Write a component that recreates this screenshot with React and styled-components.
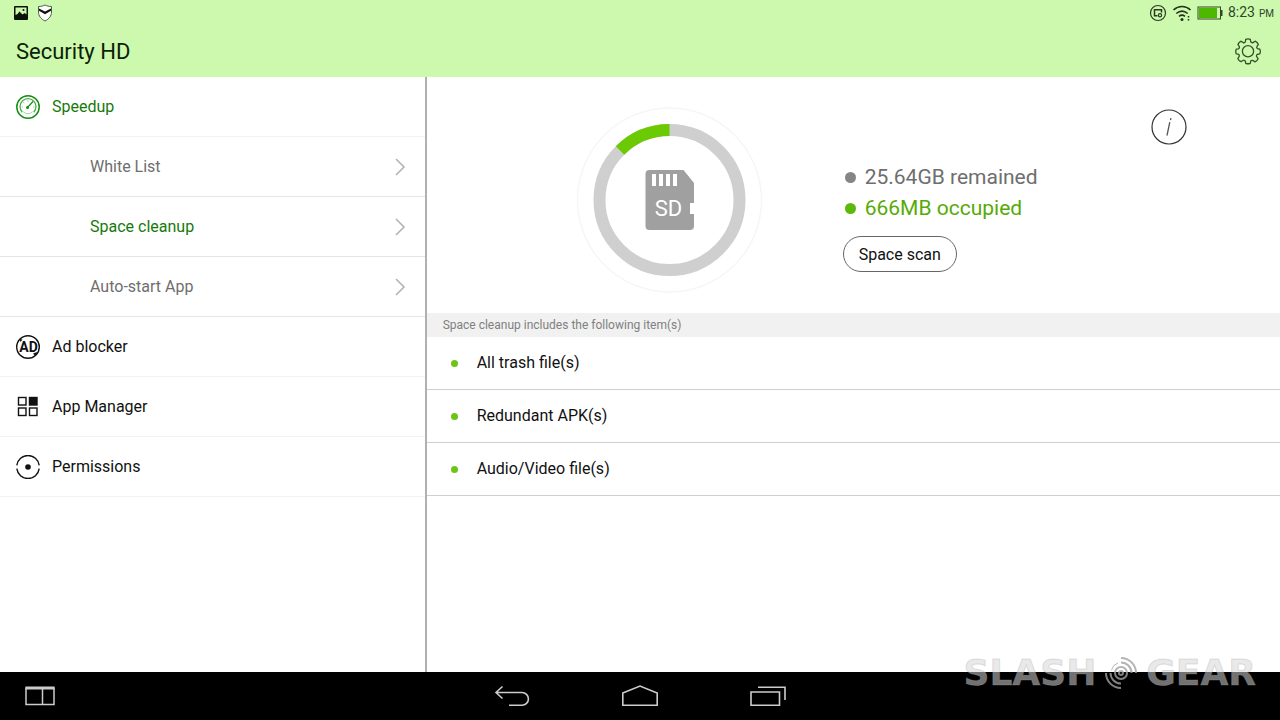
import React from 'react'
import styled, { createGlobalStyle } from 'styled-components'

const GlobalStyle = createGlobalStyle`
  * {
    box-sizing: border-box;
  }
  body {
    margin: 0;
    background: #fff;
    font-family: Roboto, "Noto Sans", sans-serif;
  }
  button {
    font-family: inherit;
    background: none;
    border: none;
    padding: 0;
    cursor: pointer;
  }
  svg {
    display: block;
    flex-shrink: 0;
  }
`

const Page = styled.div`
  position: relative;
  display: flex;
  flex-direction: column;
  min-height: 100vh;
`

const Header = styled.header`
  background: #ccf9ae;
  color: #0d1f08;
`

const StatusBar = styled.div`
  display: flex;
  justify-content: space-between;
  align-items: center;
  height: 26px;
  padding: 0 6px 0 13px;
`

const StatusGroup = styled.div`
  display: flex;
  align-items: center;
  gap: ${(props) => props.$gap}px;
`

const Clock = styled.span`
  font-size: 14px;
  line-height: 18px;
  color: #33452b;

  small {
    font-size: 10px;
    margin-left: 4px;
  }
`

const TitleBar = styled.div`
  display: flex;
  justify-content: space-between;
  align-items: center;
  height: 51px;
  padding: 0 18px 0 16px;

  h1 {
    margin: 0;
    font-size: 22px;
    font-weight: 400;
    line-height: 28px;
  }
`

const Content = styled.div`
  flex: 1;
  display: grid;
  grid-template-columns: 1fr 2fr;
`

const Sidebar = styled.nav`
  border-right: 2px solid #b0b0b0;
`

const NavItem = styled.a`
  display: flex;
  align-items: center;
  gap: 12px;
  height: 60px;
  padding: 0 16px;
  border-bottom: 1px solid ${(props) => (props.$sub ? '#e6e6e6' : '#f3f3f3')};
  color: ${(props) => (props.$active ? '#157a0c' : '#111')};
  font-size: 16px;
  line-height: 21px;
  text-decoration: none;
`

const SubItem = styled(NavItem)`
  justify-content: space-between;
  padding: 0 19px 0 90px;
  color: ${(props) => (props.$active ? '#157a0c' : '#6e6e6e')};
`

const Main = styled.main`
  min-width: 0;
`

const Overview = styled.section`
  display: flex;
  align-items: flex-start;
  padding: 30px 93px 20px 150px;
`

const Stats = styled.div`
  flex: 1;
  margin-left: 80px;
  padding-top: 55px;
`

const Stat = styled.div`
  display: flex;
  align-items: center;
  gap: 9px;
  padding-left: 2px;
  color: ${(props) => props.$color};
  font-size: 21px;
  line-height: 31px;

  &::before {
    content: '';
    width: 11px;
    height: 11px;
    border-radius: 50%;
    background: ${(props) => props.$dot};
  }
`

const ScanButton = styled.button`
  height: 36px;
  margin-top: 12px;
  padding: 0 15px;
  border: 1px solid #666;
  border-radius: 18px;
  color: #111;
  font-size: 16px;
`

const InfoButton = styled.button`
  margin-top: 2px;
`

const SectionTitle = styled.h2`
  margin: 0;
  padding: 0 16px;
  background: #f1f1f1;
  color: #808080;
  font-size: 12px;
  font-weight: 400;
  line-height: 24px;
`

const ItemList = styled.ul`
  margin: 0;
  padding: 0;
  list-style: none;
`

const Item = styled.li`
  display: flex;
  align-items: center;
  gap: 19px;
  height: 53px;
  padding: 0 24px;
  border-bottom: 1px solid #cfcfcf;
  color: #111;
  font-size: 16px;
  line-height: 22px;

  &::before {
    content: '';
    width: 7px;
    height: 7px;
    border-radius: 50%;
    background: #6cc413;
  }
`

const BottomBar = styled.footer`
  display: grid;
  grid-template-columns: 1fr auto 1fr;
  align-items: center;
  height: 48px;
  padding: 0 24px;
  background: #000;
`

const BottomKeys = styled.div`
  display: flex;
`

const KeyButton = styled.button`
  display: flex;
  justify-content: center;
  align-items: center;
  width: ${(props) => props.$width}px;
  height: 48px;
`

const Watermark = styled.div`
  position: absolute;
  right: 24px;
  bottom: 27px;
  display: flex;
  align-items: center;
  gap: 8px;
  color: rgba(215, 215, 215, 0.55);
  -webkit-text-stroke: 1px rgba(160, 160, 160, 0.3);
  font-family: "DejaVu Sans", sans-serif;
  font-size: 36px;
  font-weight: 700;
  line-height: 40px;
  pointer-events: none;
`

const PictureIcon = () => (
  <svg width="16" height="16" viewBox="0 0 16 16" aria-hidden="true">
    <rect x="1" y="1" width="14" height="14" rx="1" fill="#0c1408" />
    <path d="M2.500 2.500h11v7l-2-1.500-2 1.500-3-3-2 2.500-2 1z" fill="#ccf9ae" />
    <circle cx="10.500" cy="5" r="1" fill="#0c1408" />
  </svg>
)

const ShieldIcon = () => (
  <svg width="16" height="18" viewBox="0 0 16 18" aria-hidden="true">
    <path d="M8 1c2 1 4 1.500 6.500 1.500V8c0 4-2.500 7-6.500 9-4-2-6.500-5-6.500-9V2.500C4 2.500 6 2 8 1z" fill="#fff" stroke="#4b5d44" />
    <path d="M2 4.500l6 3 6-3v2.300l-6 3.400-6-3.400z" fill="#0c1408" />
  </svg>
)

const CastIcon = () => (
  <svg width="18" height="18" viewBox="0 0 18 18" fill="none" stroke="#2a3a22" aria-hidden="true">
    <circle cx="9" cy="9" r="7.500" strokeWidth="1.200" />
    <path d="M8.500 11.800H5.500V5.800h7v2.700" strokeWidth="1.500" />
    <circle cx="11" cy="11.200" r="1.600" strokeWidth="1.200" />
  </svg>
)

const WifiIcon = () => (
  <svg width="20" height="18" viewBox="0 0 20 18" fill="none" stroke="#22321b" strokeWidth="1.600" aria-hidden="true">
    <path d="M1.500 6c5-4.600 12-4.600 17 0M4.300 9.500c3.500-3 7.900-3 11.400 0M7 12.300c2-1.600 4-1.600 6 0" />
    <circle cx="10" cy="15.500" r="1.500" fill="#22321b" stroke="none" />
    <path d="M16.500 12v1.500M16.500 15v1.500" strokeWidth="1.500" />
  </svg>
)

const BatteryIcon = () => (
  <svg width="26" height="14" viewBox="0 0 26 14" aria-hidden="true">
    <rect x="1" y="1" width="22.500" height="12" fill="none" stroke="#33452b" />
    <rect x="2" y="2" width="18" height="10" fill="#4db800" />
    <rect x="24" y="4" width="1.500" height="6" fill="#33452b" />
  </svg>
)

const GearIcon = () => (
  <svg width="28" height="28" viewBox="-1 0.3 30 30" fill="none" stroke="#35502a" strokeWidth="1.400" strokeLinejoin="round" aria-hidden="true">
    <path d="M11.500 1.800q2.500-1 5 0l.4 2.300q.3 1 1.300 1.200.8.300 1.500-.3l2-1.300q2.400 1 3.400 3.500l-1.400 2q-.6.800-.2 1.600.3.900 1.200 1.100l2 .4q1 2.500 0 4.900l-2.200.5q-1 .3-1.300 1.200-.3.900.3 1.600l1.300 2q-1 2.400-3.400 3.400l-2-1.400q-.8-.5-1.600-.2-.8.300-1 1.200l-.4 1.900q-2.400 1-4.800 0l-.4-2q-.3-.9-1.200-1.200-.8-.3-1.500.2l-2 1.300q-2.400-1-3.400-3.400l1.300-2q.5-.7.200-1.600-.3-.9-1.200-1.100l-2-.4q-1-2.400 0-4.900l2.100-.4q.9-.3 1.200-1.200.3-.9-.3-1.600L3.200 7.200q1-2.500 3.400-3.500l2 1.300q.7.600 1.500.3.900-.3 1.100-1.200z" />
    <circle cx="14" cy="14.500" r="6" />
  </svg>
)

const SpeedIcon = () => (
  <svg width="24" height="24" viewBox="0 0 24 24" fill="none" aria-hidden="true">
    <circle cx="12" cy="12" r="11.200" stroke="#168d14" strokeWidth="1.500" />
    <path d="M6.300 17.200A8 8 0 1 1 17.700 17.200" stroke="#4fae49" strokeWidth="1.300" />
    <path d="M7.300 16.700A6.500 6.500 0 0 0 16.700 16.700" stroke="#a9d6a6" />
    <path d="M12 5.300v1.400M5.500 12h1.400M17.200 12h1.400M7.200 7.200l1 1" stroke="#7cc278" strokeWidth=".8" />
    <path d="M11 13l6-6.500" stroke="#168d14" strokeWidth="1.200" />
    <circle cx="11.500" cy="12.600" r="1.500" fill="#168d14" />
  </svg>
)

const AdIcon = () => (
  <svg width="24" height="24" viewBox="0 0 24 24" aria-hidden="true">
    <circle cx="12" cy="12" r="11.300" fill="none" stroke="#111" strokeWidth="1.400" />
    <path d="M3.500 4l3 .6-2 2.400zM17 18.500l4-1.500-1.500 4z" fill="#111" />
    <text x="12.500" y="17" textAnchor="middle" fontFamily="Roboto, sans-serif" fontSize="14" fontWeight="700" fill="#111">AD</text>
  </svg>
)

const AppsIcon = () => (
  <svg width="24" height="24" viewBox="0 0 24 24" fill="none" stroke="#111" strokeWidth="1.400" aria-hidden="true">
    <rect x="2.500" y="2.500" width="7.500" height="7.500" />
    <rect x="13.500" y="2.500" width="7.500" height="7.500" fill="#111" />
    <rect x="2.500" y="13" width="7.500" height="7.500" />
    <rect x="13.500" y="13" width="7.500" height="7.500" />
  </svg>
)

const PermissionsIcon = () => (
  <svg width="24" height="24" viewBox="0 0 24 24" fill="none" aria-hidden="true">
    <path d="M.8 10.300A11.300 11.300 0 0 1 23.200 10.300M.8 13.700A11.300 11.300 0 0 0 23.200 13.700" stroke="#111" strokeWidth="1.400" />
    <circle cx="12" cy="12" r="2.800" fill="#111" />
  </svg>
)

const Chevron = () => (
  <svg width="12" height="18" viewBox="0 0 12 18" fill="none" stroke="#b3b3b3" strokeWidth="1.600" aria-hidden="true">
    <path d="M2 1l8 8-8 8" />
  </svg>
)

const InfoIcon = () => (
  <svg width="36" height="36" viewBox="0 0 36 36" fill="none" stroke="#333" aria-hidden="true">
    <circle cx="18" cy="18" r="17" strokeWidth="1.200" />
    <path d="M18.800 13.200L16 26.500M19.900 9.200l-.4 2" stroke="#555" strokeWidth="1.300" />
  </svg>
)

const StorageDial = () => (
  <svg width="186" height="186" viewBox="0 0 186 186" role="img" aria-label="SD card usage">
    <circle cx="92.500" cy="93" r="92" fill="none" stroke="#f6f6f6" strokeWidth="1.500" />
    <circle cx="92.500" cy="93" r="70" fill="none" stroke="#cfcfcf" strokeWidth="12" />
    <path d="M43 43.500A70 70 0 0 1 92.500 23" fill="none" stroke="#6cca05" strokeWidth="12" />
    <path
      d="M72.500 63h34l10.500 13v20h-4v11h4v12a4 4 0 0 1-4 4H72.500a4 4 0 0 1-4-4V67a4 4 0 0 1 4-4z"
      fill="#a0a0a0"
    />
    <path d="M75 67h4v12h-4zM82 67h4v12h-4zM89 67h4v12h-4zM96 67h4v12h-4z" fill="#fff" />
    <text x="91.500" y="109" textAnchor="middle" fontFamily="Roboto, sans-serif" fontSize="22" fill="#fff">SD</text>
  </svg>
)

const WindowsIcon = () => (
  <svg width="32" height="22" viewBox="0 0 32 22" fill="none" stroke="#ccc" strokeWidth="1.500" aria-hidden="true">
    <path d="M2 3h28v16.500H2zM18.500 4v15" />
    <path d="M1.500 3h29" strokeWidth="3" />
  </svg>
)

const BackIcon = () => (
  <svg width="36" height="24" viewBox="0 0 36 24" fill="none" stroke="#ccc" strokeWidth="1.600" aria-hidden="true">
    <path d="M8.500 2.500L2 8.500l6.500 6M2 8.500h26a6.300 6.300 0 0 1 0 12.800H15" />
  </svg>
)

const HomeIcon = () => (
  <svg width="38" height="24" viewBox="0 0 38 24" fill="none" stroke="#ccc" strokeWidth="1.600" aria-hidden="true">
    <path d="M1.800 9L19 2l17.200 7v12.300H1.800z" />
  </svg>
)

const RecentIcon = () => (
  <svg width="38" height="24" viewBox="0 0 38 24" fill="none" stroke="#ccc" strokeWidth="1.600" aria-hidden="true">
    <path d="M2 8h28.500v13.300H2zM9 3.300h27V16" />
  </svg>
)

const SignalLogo = () => (
  <svg width="34" height="34" viewBox="0 0 34 34" fill="none" stroke="#a0a0a0" strokeOpacity=".8" strokeWidth="2" aria-hidden="true">
    <circle cx="17" cy="17" r="2" />
    <circle cx="17" cy="17" r="6" />
    <path d="M17 6.500a10.500 10.500 0 0 1 10.500 10.500M17 2a15 15 0 0 1 15 15" />
    <path d="M17 27.500A10.500 10.500 0 0 1 6.500 17M17 32A15 15 0 0 1 2 17" />
    <path d="M7.500 14a10 10 0 0 1 6.500-7" strokeWidth="1" />
  </svg>
)

const subItems = [
  { label: 'White List' },
  { label: 'Space cleanup', active: true },
  { label: 'Auto-start App' },
]

const menuItems = [
  { label: 'Ad blocker', icon: <AdIcon /> },
  { label: 'App Manager', icon: <AppsIcon /> },
  { label: 'Permissions', icon: <PermissionsIcon /> },
]

const cleanupItems = ['All trash file(s)', 'Redundant APK(s)', 'Audio/Video file(s)']

const App = () => {
  return (
    <Page>
      <GlobalStyle />
      <Header>
        <StatusBar>
          <StatusGroup $gap={8}>
            <PictureIcon />
            <ShieldIcon />
          </StatusGroup>
          <StatusGroup $gap={5}>
            <CastIcon />
            <WifiIcon />
            <BatteryIcon />
            <Clock>8:23<small>PM</small></Clock>
          </StatusGroup>
        </StatusBar>
        <TitleBar>
          <h1>Security HD</h1>
          <button type="button" aria-label="Settings"><GearIcon /></button>
        </TitleBar>
      </Header>

      <Content>
        <Sidebar>
          <NavItem href="#" $active><SpeedIcon />Speedup</NavItem>
          {subItems.map((item) => (
            <SubItem key={item.label} href="#" $sub $active={item.active}>
              {item.label}
              <Chevron />
            </SubItem>
          ))}
          {menuItems.map((item) => (
            <NavItem key={item.label} href="#">
              {item.icon}
              {item.label}
            </NavItem>
          ))}
        </Sidebar>

        <Main>
          <Overview>
            <StorageDial />
            <Stats>
              <Stat $color="#6e6e6e" $dot="#858585">25.64GB remained</Stat>
              <Stat $color="#55ab05" $dot="#5cb80a">666MB occupied</Stat>
              <ScanButton type="button">Space scan</ScanButton>
            </Stats>
            <InfoButton type="button" aria-label="Information"><InfoIcon /></InfoButton>
          </Overview>
          <SectionTitle>Space cleanup includes the following item(s)</SectionTitle>
          <ItemList>
            {cleanupItems.map((item) => (
              <Item key={item}>{item}</Item>
            ))}
          </ItemList>
        </Main>
      </Content>

      <BottomBar>
        <KeyButton type="button" $width={32} aria-label="Split screen"><WindowsIcon /></KeyButton>
        <BottomKeys>
          <KeyButton type="button" $width={128} aria-label="Back"><BackIcon /></KeyButton>
          <KeyButton type="button" $width={128} aria-label="Home"><HomeIcon /></KeyButton>
          <KeyButton type="button" $width={128} aria-label="Recent apps"><RecentIcon /></KeyButton>
        </BottomKeys>
      </BottomBar>

      <Watermark>
        <span>SLASH</span>
        <SignalLogo />
        <span>GEAR</span>
      </Watermark>
    </Page>
  )
}

export default App
